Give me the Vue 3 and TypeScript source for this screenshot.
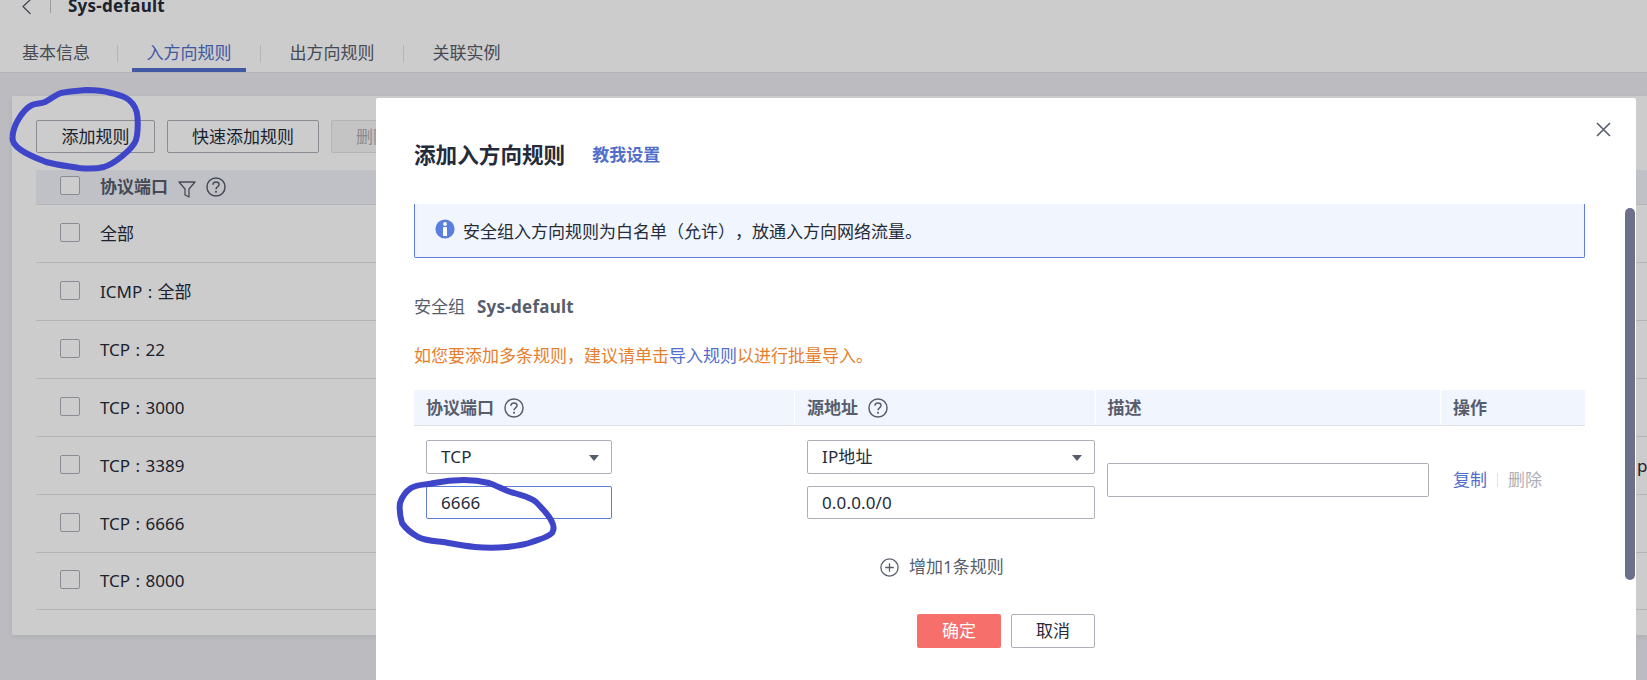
<script setup lang="ts">
const tabs = ['基本信息', '入方向规则', '出方向规则', '关联实例']
const rows = [
  { name: '全部', tail: '' },
  { name: 'ICMP : 全部', tail: '' },
  { name: 'TCP : 22', tail: '' },
  { name: 'TCP : 3000', tail: '' },
  { name: 'TCP : 3389', tail: 'p' },
  { name: 'TCP : 6666', tail: '' },
  { name: 'TCP : 8000', tail: '' },
]
</script>

<template>
  <div class="page">
    <svg class="defs" width="0" height="0" aria-hidden="true">
      <symbol id="help" viewBox="0 0 19 19">
        <circle cx="9.5" cy="9.5" r="8.6" fill="none" stroke="currentColor" stroke-width="1.4" />
        <path d="M6.6 7.4c0-1.7 1.3-2.7 2.9-2.7s2.9 1 2.9 2.5c0 2.2-2.9 2.2-2.9 4.4" fill="none" stroke="currentColor" stroke-width="1.4" />
        <circle cx="9.5" cy="14" r="1" fill="currentColor" />
      </symbol>
    </svg>

    <header class="head">
      <div class="crumb">
        <svg class="back" width="11" height="16" viewBox="0 0 11 16"><path d="M9.500 .5 2 7.500l7.500 7.500" fill="none" stroke="#575d6c" stroke-width="1.300" /></svg>
        <i class="crumb-sep"></i>
        <strong>Sys-default</strong>
      </div>
      <nav class="tabs">
        <template v-for="(t, i) in tabs" :key="t">
          <i v-if="i" class="tab-sep"></i>
          <span class="tab" :class="{ first: i === 0, active: i === 1 }">{{ t }}</span>
        </template>
      </nav>
    </header>

    <main class="main">
      <section class="panel">
        <div class="actions">
          <button class="btn b1">添加规则</button>
          <button class="btn b2">快速添加规则</button>
          <button class="btn b3">删除</button>
        </div>
        <div class="thead">
          <span class="check"></span>
          <b>协议端口</b>
          <svg class="funnel" width="18" height="17" viewBox="0 0 18 17"><path d="M1 1h16l-6 7v8l-4-2V8z" fill="none" stroke="#575d6c" stroke-width="1.300" stroke-linejoin="round" /></svg>
          <svg class="help" width="20" height="20"><use href="#help" /></svg>
        </div>
        <div v-for="r in rows" :key="r.name" class="row">
          <span class="check"></span>
          <span class="name">{{ r.name }}</span>
          <span v-if="r.tail" class="tail">{{ r.tail }}</span>
        </div>
      </section>
    </main>

    <div class="mask"></div>

    <section class="modal">
      <button class="close" aria-label="关闭">
        <svg width="15" height="15" viewBox="0 0 15 15"><path d="M1 1l13 13M14 1 1 14" fill="none" stroke="#575d6c" stroke-width="1.600" /></svg>
      </button>
      <div class="title-row">
        <h2>添加入方向规则</h2>
        <a class="teach">教我设置</a>
      </div>
      <div class="alert">
        <svg width="20" height="20" viewBox="0 0 20 20">
          <circle cx="10" cy="10" r="9.600" fill="#5b7fe0" />
          <circle cx="10" cy="5" r="1.900" fill="#fff" />
          <rect x="8" y="8" width="4" height="9" rx=".5" fill="#fff" />
        </svg>
        <span>安全组入方向规则为白名单（允许），放通入方向网络流量。</span>
      </div>
      <div class="group"><span>安全组</span><b>Sys-default</b></div>
      <p class="warn">如您要添加多条规则，建议请单击<a>导入规则</a>以进行批量导入。</p>

      <div class="grid ghead">
        <div><b>协议端口</b><svg class="help" width="20" height="20"><use href="#help" /></svg></div>
        <div><b>源地址</b><svg class="help" width="20" height="20"><use href="#help" /></svg></div>
        <div><b>描述</b></div>
        <div><b>操作</b></div>
      </div>
      <div class="grid gbody">
        <div class="stack port">
          <div class="field select">TCP<i class="arrow"></i></div>
          <div class="field focus">6666</div>
        </div>
        <div class="stack src">
          <div class="field select">IP地址<i class="arrow"></i></div>
          <div class="field">0.0.0.0/0</div>
        </div>
        <div class="desc"><div class="field"></div></div>
        <div class="ops"><a>复制</a><i></i><span>删除</span></div>
      </div>

      <div class="add">
        <svg width="19" height="19" viewBox="0 0 19 19">
          <circle cx="9.500" cy="9.500" r="8.600" fill="none" stroke="#575d6c" stroke-width="1.300" />
          <path d="M9.500 5.200v8.600M5.200 9.500h8.600" stroke="#575d6c" stroke-width="1.300" />
        </svg>
        <span>增加1条规则</span>
      </div>
      <div class="foot">
        <button class="ok">确定</button>
        <button class="cancel">取消</button>
      </div>
      <i class="scroll"></i>
    </section>

    <svg class="ink" width="1647" height="680" viewBox="0 0 1647 680" fill="none" aria-hidden="true">
      <path d="M87 90C97 90 104 91 111 93C119 95 124 96 129 100C135 105 137 110 137.500 117C138 125 138 133 136 140C133 148 127 152 121 157C115 162 110 165 104 167C96 169 88 169 79 168C67 166 57 165 46 162C36 158 28 155 21 150C15 146 12 142 12.500 137C13 130 15 125 18 120C22 113 26 108 32 105C37 103 40 104 45 102C51 99 55 95 61 93C70 91 78 91 87 90Z" stroke="#3f45c9" stroke-width="6" stroke-linecap="round" />
      <path d="M434 483C444 481 454 480 464 480C473 480 481 481 489 483C498 486 505 491 514 493C523 496 530 497 536 502C543 509 549 515 552 522C554 526 554 530 552 533C547 538 540 539 532 542C524 545 516 546 507 547C496 548 486 548 475 547C464 546 454 544 443 542C434 541 426 541 418 537C411 533 406 529 402 523C400 516 399 510 400 503C402 497 405 492 411 488C418 484 426 485 434 483Z" stroke="#3f45c9" stroke-width="6" stroke-linecap="round" />
    </svg>
  </div>
</template>

<style>
html, body { margin: 0; overflow: hidden; }
</style>

<style scoped>
.page {
  position: relative;
  width: 1647px;
  height: 680px;
  overflow: hidden;
  display: flex;
  flex-direction: column;
  background: #ebecf1;
  font: 17px/24px "Noto Sans", "Noto Sans CJK SC", sans-serif;
  text-spacing-trim: space-all;
  color: #252b3a;
}
.defs { position: absolute; }
.head {
  box-sizing: border-box;
  height: 73px;
  background: #fff;
  border-bottom: 1px solid #dfe1e6;
  flex: none;
}
.crumb {
  height: 12px;
  display: flex;
  align-items: center;
  padding-left: 21px;
}
.back { margin-top: 2px; flex: none; }
.crumb-sep { width: 1px; height: 14px; background: #c4c6cc; margin: 0 17px 0 18px; flex: none; }
.crumb strong { font-weight: 700; letter-spacing: .25px; color: #252b3a; }
.tabs { display: flex; align-items: center; height: 60px; }
.tab {
  box-sizing: border-box;
  height: 38px;
  padding: 0 14.500px;
  margin-top: 22px;
  line-height: 38px;
  color: #575d6c;
  white-space: nowrap;
}
.tab.first { padding: 0 13px 0 22px; }
.tab.active { color: #526ecc; border-bottom: 4px solid #526ecc; }
.tab-sep { width: 1px; height: 17px; margin: 22px 14px 0; background: #dfe1e6; flex: none; }
.main { flex: 1; padding: 23px 0 45px 12px; min-height: 0; }
.panel { height: 539px; background: #fff; padding: 24px 0 0 24px; box-sizing: border-box; box-shadow: 0 2px 6px rgba(0,0,0,.08); }
.actions { display: flex; gap: 12px; height: 33px; margin-bottom: 17px; }
.btn {
  box-sizing: border-box;
  height: 33px;
  padding: 0;
  font: inherit;
  color: #252b3a;
  background: #fff;
  border: 1px solid #adb0b8;
  border-radius: 2px;
}
.b1 { width: 119px; }
.b2 { width: 152px; }
.b3 { width: 90px; color: #adb0b8; background: #f5f5f6; border-color: #dfe1e6; text-align: left; padding-left: 24px; }
.thead, .row {
  display: flex;
  align-items: center;
  padding-left: 24px;
  box-sizing: border-box;
  border-bottom: 1px solid #dfe1e6;
}
.thead { height: 35px; background: #f0f2f8; color: #575d6c; }
.thead .funnel { margin-left: 10px; margin-top: 4px; }
.thead .help { margin-left: 10px; }
.row { height: 58px; }
.row:last-child { height: 57px; }
.check {
  box-sizing: border-box;
  width: 20px;
  height: 19px;
  border: 1px solid #adb0b8;
  border-radius: 2px;
  background: #fff;
  margin-right: 20px;
  flex: none;
}
.thead .check { margin-top: -4px; }
.row .check { margin-top: -3px; }
.name { white-space: nowrap; word-spacing: 1px; }
.tail { margin-left: auto; width: 10px; }
.help { color: #575d6c; flex: none; }
.mask { position: absolute; inset: 0; background: rgba(0, 0, 0, .2); }
.modal {
  position: absolute;
  left: 376px;
  top: 98px;
  width: 1260px;
  height: 582px;
  box-sizing: border-box;
  padding: 42px 51px 0 38px;
  background: #fff;
  border-radius: 2px 2px 0 0;
  overflow: hidden;
}
.close {
  position: absolute;
  right: 25px;
  top: 24px;
  padding: 0;
  border: 0;
  background: none;
  line-height: 0;
}
.title-row { display: flex; align-items: center; height: 30px; gap: 27px; }
h2 { margin: 0; font-size: 21.600px; line-height: 30px; font-weight: 700; }
.teach { color: #526ecc; font-weight: 700; }
.alert {
  box-sizing: border-box;
  height: 54px;
  margin-top: 34px;
  padding: 0 0 0 20px;
  display: flex;
  align-items: center;
  gap: 8px;
  background: #f1f5fd;
  border: 1px solid #5e7ce0;
  border-top: 0;
  border-radius: 0 0 2px 2px;
  color: #252b3a;
}
.alert svg { flex: none; margin-top: -3px; }
.alert span { margin-top: 2px; }
.group { margin-top: 37px; display: flex; gap: 12px; color: #575d6c; }
.group b { letter-spacing: .25px; }
.warn { margin: 25px 0 0; color: #e67e2e; }
.warn a { color: #526ecc; }
.grid { display: grid; grid-template-columns: 380px 300.500px 345.500px 145px; }
.ghead { height: 36px; margin-top: 22px; background: #f1f5fd; border-bottom: 1px solid #dfe1e6; box-sizing: border-box; color: #575d6c; }
.ghead > div { display: flex; align-items: center; gap: 10px; padding-left: 12px; border-left: 1px solid #fff; box-sizing: border-box; }
.ghead > div:first-child { border-left: 0; }
.gbody { padding-top: 14px; align-items: center; }
.stack { display: flex; flex-direction: column; gap: 12px; padding-left: 12px; box-sizing: border-box; }
.port .field { width: 186px; }
.src { padding-left: 13px; }
.src .field { width: 287.500px; }
.field {
  position: relative;
  box-sizing: border-box;
  height: 33px;
  line-height: 31px;
  padding-left: 14px;
  background: #fff;
  border: 1px solid #adb0b8;
  border-radius: 2px;
  letter-spacing: .15px;
  color: #252b3a;
}
.select { height: 34px; line-height: 32px; }
.focus { border-color: #5e7ce0; }
.arrow {
  position: absolute;
  right: 12px;
  top: 14px;
  border: 5px solid transparent;
  border-top: 6px solid #575d6c;
  border-bottom: 0;
}
.desc { padding-left: 12.500px; }
.desc .field { width: 322px; height: 34px; }
.ops { display: flex; align-items: center; padding-left: 13px; }
.ops a { color: #526ecc; }
.ops i { width: 1px; height: 14px; margin: 0 10px; background: #dfe1e6; }
.ops span { color: #adb0b8; }
.add { display: flex; align-items: center; justify-content: flex-start; gap: 10px; height: 24px; margin-top: 36px; padding-left: 466px; color: #575d6c; }
.add svg { flex: none; }
.foot { display: flex; gap: 10px; margin-top: 35px; padding-left: 503px; }
.foot button { box-sizing: border-box; width: 84px; height: 34px; padding: 0; font: inherit; border-radius: 2px; }
.ok { background: #f66f6a; border: 0; color: #fff; }
.cancel { background: #fff; border: 1px solid #adb0b8; color: #252b3a; }
.scroll { position: absolute; left: 1249px; top: 110px; width: 10px; height: 372px; border-radius: 5px; background: #6c7089; }
.ink { position: absolute; left: 0; top: 0; pointer-events: none; }
</style>
